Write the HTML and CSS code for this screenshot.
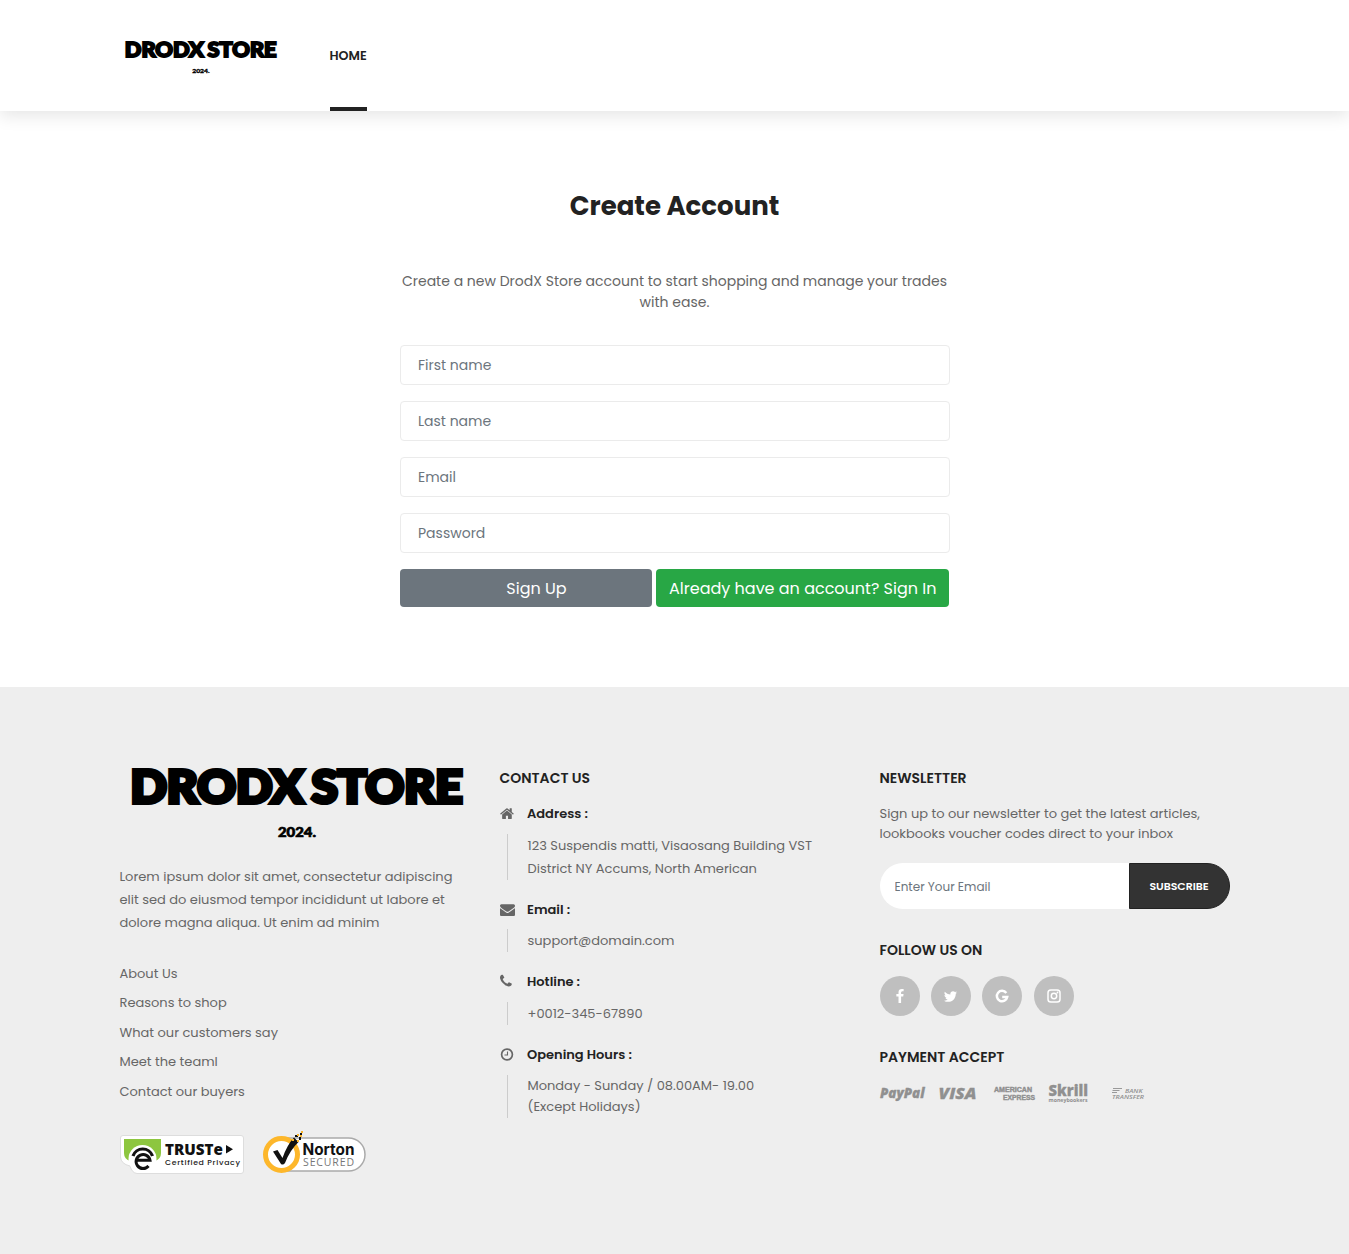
FILE: index.html
```html
<!DOCTYPE html>
<html lang="en">
<head>
<meta charset="utf-8">
<title>DrodX Store - Create Account</title>
<link rel="stylesheet" href="styles.css">
</head>
<body>
<svg class="defs" aria-hidden="true">
  <symbol id="logo" viewBox="0 0 350 100">
    <g class="logo-text">
      <text x="10.500" y="52.800" font-size="45" textLength="173" lengthAdjust="spacingAndGlyphs" stroke-width="4.200">DRODX</text>
      <text x="191.500" y="52.800" font-size="45" textLength="151" lengthAdjust="spacingAndGlyphs" stroke-width="4.200">STORE</text>
      <text x="158" y="86.500" font-size="13.500" textLength="38" lengthAdjust="spacingAndGlyphs" stroke-width=".7">2024.</text>
    </g>
  </symbol>
</svg>

<header class="header">
  <div class="container header-row">
    <a class="brand"><svg class="brand-logo"><use href="#logo"/></svg></a>
    <nav class="nav"><a class="nav-link">HOME</a></nav>
  </div>
</header>

<main class="account">
  <h1 class="title">Create Account</h1>
  <p class="intro">Create a new DrodX Store account to start shopping and manage your trades<br>with ease.</p>
  <form class="form">
    <input class="field" type="text" placeholder="First name">
    <input class="field" type="text" placeholder="Last name">
    <input class="field" type="email" placeholder="Email">
    <input class="field" type="password" placeholder="Password">
    <div class="actions">
      <button class="btn btn-up" type="button">Sign Up</button>
      <a class="btn btn-in">Already have an account? Sign In</a>
    </div>
  </form>
</main>

<footer class="footer">
  <div class="container footer-row">
    <section class="col">
      <svg class="footer-logo"><use href="#logo"/></svg>
      <p class="about">Lorem ipsum dolor sit amet, consectetur adipiscing<br>elit sed do eiusmod tempor incididunt ut labore et<br>dolore magna aliqua. Ut enim ad minim</p>
      <ul class="links">
        <li>About Us</li>
        <li>Reasons to shop</li>
        <li>What our customers say</li>
        <li>Meet the teaml</li>
        <li>Contact our buyers</li>
      </ul>
      <div class="badges">
        <svg width="124" height="39" viewBox="0 0 124 39">
          <path d="M3 .5H121q2.500 0 2.500 2.500V36q0 2.500-2.500 2.500H17Q12 38 10 31 1 29 .5 22V3Q.5.500 3 .5Z" fill="#fff" stroke="#ddd"/>
          <path d="M4 4H41V18Q41 24 35 26L10 26Q4 24 4 18Z" fill="#8dc63f"/>
          <circle cx="22.500" cy="24" r="14" fill="#fff"/>
          <path d="M13 21a10.300 10.300 0 0 1 19.500 0" fill="none" stroke="#111" stroke-width="3.200"/>
          <path d="M16 25.300H30A7 7 0 1 0 28.500 31Q25 34.500 20 33" fill="none" stroke="#111" stroke-width="3"/>
          <text class="t-head" x="45" y="19.500" font-size="15" textLength="58" lengthAdjust="spacingAndGlyphs">TRUSTe</text>
          <path d="M106 10l7 4.200-7 4.200z" fill="#111"/>
          <text class="t-sub" x="45" y="29.800" font-size="7.800" textLength="75">Certified Privacy</text>
        </svg>
        <svg width="104" height="44" viewBox="0 0 104 44">
          <path d="M20 8H85.500a16.500 16.500 0 0 1 0 33H20z" fill="#fff" stroke="#aaa" stroke-width="1.500"/>
          <circle cx="18.500" cy="24.500" r="16" fill="#fff" stroke="#fdb72b" stroke-width="5"/>
          <path d="M10 21.500l4.500-1.500 5 8Q24 15 31 7.500l4.500 4.500Q27 20 22 33q-2 2.500-4 1Z" fill="#111"/>
          <path d="M32 5h3v2h-3zM36 7h2v3h-2zM37 3h2v2h-2z" fill="#111"/>
          <path d="M29 9h2v2h-2zM34 4h2v2h-2zM38 1h2v2h-2zM37 5h2v2h-2zM34 10h2v2h-2z" fill="#fdb72b"/>
          <text class="n-head" x="39.500" y="25" font-size="16" textLength="52" lengthAdjust="spacingAndGlyphs">Norton</text>
          <text class="n-sub" x="40" y="35.500" font-size="10.500" textLength="51">SECURED</text>
        </svg>
      </div>
    </section>

    <section class="col">
      <h2 class="heading">CONTACT US</h2>
      <dl class="contact">
        <dt class="l-address"><svg class="ic" viewBox="0 100 1792 1792"><path d="M1408 992v480q0 26-19 45t-45 19H960v-384H704v384H320q-26 0-45-19t-19-45V992q0-1 .5-3t.5-3l575-474 575 474q1 2 1 6zm223-69l-62 74q-8 9-21 11h-3q-13 0-21-7L832 424 140 1001q-12 8-24 7-13-2-21-11l-62-74q-8-10-7-23.500T37 878L756 279q32-26 76-26t76 26l244 204V288q0-14 9-23t23-9h192q14 0 23 9t9 23v408l219 182q10 8 11 21.500t-7 23.500z"/></svg>Address :</dt>
        <dd class="address">123 Suspendis matti, Visaosang Building VST<br>District NY Accums, North American</dd>
        <dt class="l-email"><svg class="ic" viewBox="0 100 1792 1792"><path d="M1792 710v794q0 66-47 113t-113 47H160q-66 0-113-47T0 1504V710q44 49 101 87 362 246 497 345 57 42 92.500 65.500t94.500 48T895 1280h2q51 0 110-24.500t94.500-48T1194 1142q170-123 498-345 57-39 100-87zm0-294q0 79-49 151t-122 123q-376 261-468 325-10 7-42.500 30.500t-54 38-52 32.500-57.500 27-50 9h-2q-23 0-50-9t-57.500-27-52-32.500-54-38T639 1015q-91-64-262-182.500T172 690q-62-42-117-115.500T0 438q0-78 41.500-130T160 256h1472q65 0 112.500 47t47.500 113z"/></svg>Email :</dt>
        <dd class="mail">support@domain.com</dd>
        <dt><svg class="ic" viewBox="0 50 1792 1792"><path d="M1408 1240q0 27-10 70.500t-21 68.500q-21 50-122 106-94 51-186 51-27 0-53-3.500t-57.500-12.500-47-14.500T856 1485t-49-18q-98-35-175-83-127-79-264-216T152 904q-48-77-83-175-3-9-18-49t-20.500-55.500T16 577.500 3.500 520 0 467q0-92 51-186 56-101 106-122 25-11 68.500-21t70.500-10q14 0 21 3 18 6 53 76 11 19 30 54t35 63.500 31 53.500q3 4 17.500 25t21.500 35.500 7 28.500q0 20-28.500 50t-62 55-62 53-28.500 46q0 9 5 22.500t8.500 20.500 14 24 11.500 19q76 137 174 235t235 174q2 1 19 11.500t24 14 20.500 8.500 22.500 5q18 0 46-28.500t53-62 55-62 50-28.500q14 0 28.500 7t35.500 21.500 25 17.500q25 15 53.500 31t63.500 35 54 30q70 35 76 53 3 7 3 21z"/></svg>Hotline :</dt>
        <dd class="phone">+0012-345-67890</dd>
        <dt><svg class="ic" viewBox="0 0 15 15"><circle class="ring" cx="7" cy="7.500" r="5.400"/><path class="hands" d="M7.500 4.500V8H4.500"/></svg>Opening Hours :</dt>
        <dd class="hours">Monday - Sunday / 08.00AM- 19.00<br>(Except Holidays)</dd>
      </dl>
    </section>

    <section class="col">
      <h2 class="heading">NEWSLETTER</h2>
      <p class="news">Sign up to our newsletter to get the latest articles,<br>lookbooks voucher codes direct to your inbox</p>
      <form class="subscribe">
        <input class="sub-field" type="email" placeholder="Enter Your Email">
        <button class="sub-btn" type="button">SUBSCRIBE</button>
      </form>
      <h2 class="heading h-follow">FOLLOW US ON</h2>
      <div class="social">
        <a class="dot"><svg width="8" height="14" viewBox="95 0 864 1664"><path d="M959 12v264H802q-86 0-116 36t-30 108v189h293l-39 296H656v759H350V905H95V609h255V391q0-186 104-288.500T731 0q147 0 228 12z"/></svg></a>
        <a class="dot"><svg width="15" height="15" viewBox="0 0 1664 1792"><path d="M1620 408q-67 98-162 167 1 14 1 42 0 130-38 259.500T1305.500 1125 1121 1335.500t-258 146-323 54.500q-271 0-496-145 35 4 78 4 225 0 401-138-105-2-188-64.500T221 1033q33 5 61 5 43 0 85-11-112-23-185.500-111.500T108 710v-4q68 38 146 41-66-44-105-115t-39-154q0-88 44-163 121 149 294.500 238.500T820 653q-8-38-8-74 0-134 94.500-228.500T1135 256q140 0 236 102 109-21 205-78-37 115-142 178 93-10 186-50z"/></svg></a>
        <a class="dot"><svg width="14" height="14" viewBox="0 0 14 14"><path d="M11.300 4A5.200 5.200 0 1 0 12.200 8H7.200" fill="none" stroke="#fff" stroke-width="2.500"/></svg></a>
        <a class="dot"><svg width="14" height="14" viewBox="0 0 14 14"><rect x="1" y="1" width="12" height="12" rx="2.800" fill="none" stroke="#fff" stroke-width="1.500"/><circle cx="7" cy="7" r="2.700" fill="none" stroke="#fff" stroke-width="1.500"/><circle cx="10.500" cy="3.500" r=".9"/></svg></a>
      </div>
      <h2 class="heading h-pay">PAYMENT ACCEPT</h2>
      <svg class="payments" width="270" height="24" viewBox="0 0 270 24">
        <text class="p-heavy" x="0" y="15.500" font-size="14" textLength="44.500" lengthAdjust="spacingAndGlyphs">PayPal</text>
        <text class="p-heavy" x="58.500" y="17" font-size="16" textLength="38" lengthAdjust="spacingAndGlyphs">VISA</text>
        <text class="p-amex" x="114" y="10" font-size="6.500" textLength="38" lengthAdjust="spacingAndGlyphs">AMERICAN</text>
        <text class="p-amex" x="123" y="18" font-size="6.500" textLength="32" lengthAdjust="spacingAndGlyphs">EXPRESS</text>
        <text class="p-skrill" x="168.500" y="14" font-size="16.500" textLength="39.500" lengthAdjust="spacingAndGlyphs">Skrill</text>
        <text class="p-money" x="168.500" y="20" font-size="6" textLength="39" lengthAdjust="spacingAndGlyphs">moneybookers</text>
        <path d="M233 6.500h9M232.500 8.500h7M232 10.500h5"/>
        <text class="p-bank" x="245" y="10.500" font-size="6" textLength="17.500" lengthAdjust="spacingAndGlyphs">BANK</text>
        <text class="p-bank" x="232" y="16.500" font-size="6" textLength="32" lengthAdjust="spacingAndGlyphs">TRANSFER</text>
      </svg>
    </section>
  </div>
</footer>
</body>
</html>
```
FILE: styles.css
```css
* { box-sizing: border-box; }
body {
  margin: 0;
  background: #fff;
  color: #666;
  font: 13px/23px Poppins, Inter, "Noto Sans", sans-serif;
  white-space: nowrap;
}
h1, h2, p, ul, dl, dd { margin: 0; padding: 0; }
ul { list-style: none; }
svg { display: block; flex: none; overflow: visible; }
input, button { font-family: inherit; margin: 0; }
.defs { position: absolute; width: 0; height: 0; }
.logo-text { font-family: Lato, sans-serif; font-weight: 900; fill: #000; stroke: #000; }
.container { width: 1110px; margin: 0 auto; }

.header { height: 111px; background: #fff; box-shadow: 0 5px 16px rgba(0, 0, 0, .1); }
.header-row { display: flex; gap: 50px; height: 111px; }
.brand { padding-top: 33px; }
.brand-logo { width: 160px; height: 46px; }
.nav { display: flex; }
.nav-link {
  height: 111px;
  border-bottom: 4px solid #222;
  color: #222;
  font-size: 12.700px;
  font-weight: 600;
  line-height: 111px;
}

.account { width: 550px; height: 576px; margin: 0 auto; padding-top: 75px; }
.title { color: #222; font-size: 26px; font-weight: 700; line-height: 40px; text-align: center; }
.intro { margin-top: 45px; font-size: 14px; line-height: 21px; text-align: center; }
.form { display: flex; flex-direction: column; gap: 16px; margin-top: 32px; }
.field {
  width: 550px;
  height: 40px;
  padding: 0 17.500px;
  border: 1px solid #ebebeb;
  border-radius: 4px;
  background: #fff;
  font-size: 14px;
}
.field::placeholder, .sub-field::placeholder { color: #6c757d; opacity: 1; }
.actions { display: flex; gap: 4px; }
.btn { height: 38px; border: 0; border-radius: 4px; color: #fff; font-size: 16px; line-height: 37px; text-align: center; }
.btn-up { width: 252px; padding: 1px 0 0 22px; background: #6c757d; }
.btn-in { width: 293.500px; padding: 1px 0 0 1px; background: #28a745; }

.footer { height: 567px; background: #eee; }
.footer-row { display: grid; grid-template-columns: 350px 350px 350px; gap: 30px; }
.col { padding-top: 80px; }
.footer-logo { width: 350px; height: 100px; margin-top: -17px; }
.about { margin-top: 15px; }
.links { margin-top: 24.700px; line-height: 29.500px; }
.badges { display: flex; gap: 19px; align-items: flex-end; margin-top: 24.300px; }
.t-head { font-family: "Open Sans", sans-serif; font-weight: 800; fill: #111; }
.t-sub { font-family: Poppins, sans-serif; font-weight: 500; fill: #222; }
.n-head { font-family: Inter, sans-serif; font-weight: 700; fill: #111; }
.n-sub { font-family: "Open Sans", sans-serif; fill: #777; }

.heading { color: #222; font-size: 14px; font-weight: 600; line-height: 22px; }
.contact dt {
  display: flex;
  align-items: center;
  gap: 12.500px;
  height: 20px;
  color: #222;
  font-weight: 600;
  line-height: 20px;
}
.ic { width: 15px; height: 15px; fill: #666; }
.ring { fill: none; stroke: #666; stroke-width: 1.7; }
.hands { fill: none; stroke: #666; stroke-width: 1.1; }
.contact dd { margin-left: 7.500px; padding-left: 19.500px; border-left: 1px solid #ccc; }
.contact .l-address { margin-top: 15px; }
.address { margin-top: 10px; margin-bottom: 20px; }
.contact .l-email { margin-bottom: 9px; }
.mail { margin-bottom: 19.500px; }
.phone { margin-top: 10.500px; margin-bottom: 19.500px; }
.hours { margin-top: 10px; line-height: 21.500px; }

.news { margin-top: 15px; line-height: 20px; }
.subscribe { display: flex; width: 350px; height: 46px; margin-top: 19px; }
.sub-field { width: 249px; padding: 1px 15px 0; border: 0; border-radius: 23px 0 0 23px; background: #fff; font-size: 12px; }
.sub-btn { width: 101px; padding: 0; border: 1px solid #222; border-radius: 0 23px 23px 0; background: #333; color: #fff; font-size: 11px; font-weight: 600; letter-spacing: -.05px; }
.h-follow { margin-top: 30px; }
.social { display: flex; gap: 11.400px; margin-top: 15px; }
.dot { display: flex; align-items: center; justify-content: center; width: 40px; height: 40px; border-radius: 50%; background: #bfbfbf; }
.dot svg { fill: #fff; }
.h-pay { margin-top: 30px; }
.payments { margin-top: 14px; fill: #909090; }
.payments path { stroke: #999; stroke-width: 1; }
.p-heavy { font-family: "Open Sans", sans-serif; font-weight: 800; font-style: italic; stroke: #909090; stroke-width: .3; }
.p-amex { font-family: "Liberation Sans", sans-serif; font-weight: 700; stroke: #909090; stroke-width: .4; }
.p-skrill { font-family: "Open Sans", sans-serif; font-weight: 800; stroke: #909090; stroke-width: .3; }
.p-money { font-family: "Open Sans", sans-serif; font-weight: 700; }
.p-bank { font-family: "Open Sans", sans-serif; font-weight: 600; font-style: italic; }
```
